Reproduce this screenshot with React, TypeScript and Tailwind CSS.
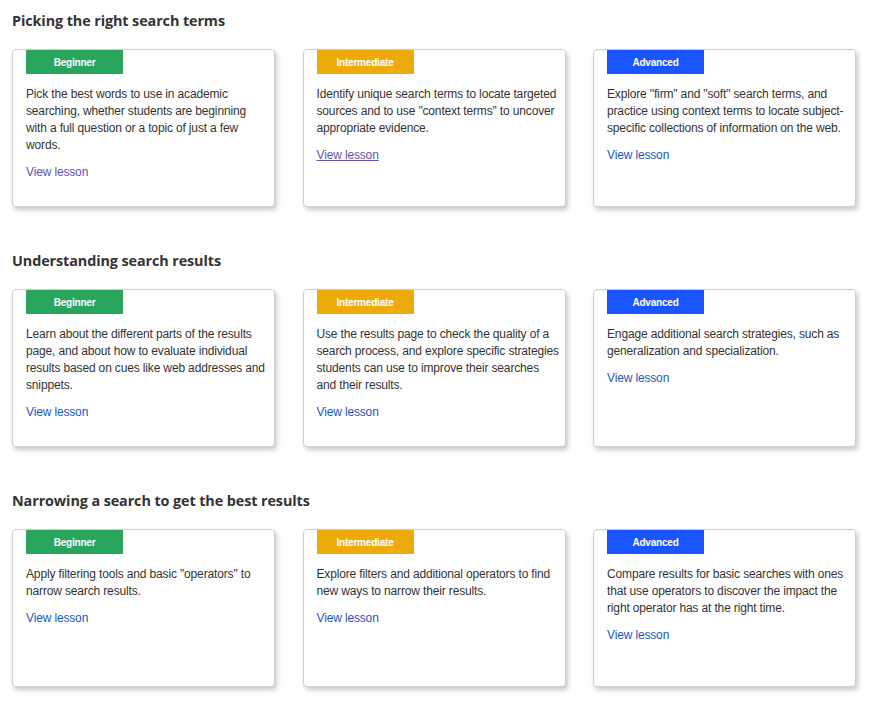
const sections = [
  {
    title: 'Picking the right search terms',
    cards: [
      {
        text: 'Pick the best words to use in academic searching, whether students are beginning with a full question or a topic of just a few words.',
        link: 'visited',
        narrow: true,
      },
      {
        text: 'Identify unique search terms to locate targeted sources and to use "context terms" to uncover appropriate evidence.',
        link: 'hover',
      },
      {
        text: 'Explore "firm" and "soft" search terms, and practice using context terms to locate subject-specific collections of information on the web.',
        link: 'normal',
      },
    ],
  },
  {
    title: 'Understanding search results',
    cards: [
      {
        text: 'Learn about the different parts of the results page, and about how to evaluate individual results based on cues like web addresses and snippets.',
        link: 'normal',
      },
      {
        text: 'Use the results page to check the quality of a search process, and explore specific strategies students can use to improve their searches and their results.',
        link: 'normal',
      },
      {
        text: 'Engage additional search strategies, such as generalization and specialization.',
        link: 'normal',
      },
    ],
  },
  {
    title: 'Narrowing a search to get the best results',
    cards: [
      {
        text: 'Apply filtering tools and basic "operators" to narrow search results.',
        link: 'normal',
      },
      {
        text: 'Explore filters and additional operators to find new ways to narrow their results.',
        link: 'normal',
      },
      {
        text: 'Compare results for basic searches with ones that use operators to discover the impact the right operator has at the right time.',
        link: 'normal',
      },
    ],
  },
]

const levels = [
  { label: 'Beginner', className: 'bg-[#2aa55c]' },
  { label: 'Intermediate', className: 'bg-[#edaa08]' },
  { label: 'Advanced', className: 'bg-[#1b55ff]' },
]

const linkClass: Record<string, string> = {
  visited: 'text-[#6650b0]',
  hover: 'text-[#6650b0] underline',
  normal: 'text-[#1a57c0]',
}

type CardProps = {
  level: number
  text: string
  link: string
  narrow?: boolean
}

const LessonCard = (props: CardProps) => {
  const level = levels[props.level]
  return (
    <div className="h-[158px] rounded-[4px] border border-[#cfcfcf] bg-white pl-[13px] pr-[4px] shadow-[2px_3px_5px_rgba(0,0,0,0.22)]">
      <div
        className={`flex h-6 w-[97px] items-center justify-center text-[10px] font-bold tracking-[-0.2px] text-white ${level.className}`}
      >
        {level.label}
      </div>
      <p
        className={`mt-[12px] text-[12px] leading-[17px] tracking-[-0.15px] text-[#333] ${props.narrow ? 'max-w-[236px]' : ''}`}
      >
        {props.text}
      </p>
      <a
        href="#"
        className={`mt-[10px] block w-fit text-[12px] leading-[17px] tracking-[-0.15px] ${linkClass[props.link]}`}
      >
        View lesson
      </a>
    </div>
  )
}

export default function App() {
  return (
    <div className="min-h-screen bg-white px-3 pt-[11px] font-['Liberation_Sans',Arial,sans-serif]">
      <div className="flex flex-col gap-[44px]">
        {sections.map((section) => (
          <section key={section.title}>
            <h2 className="mb-[18px] h-5 font-['Open_Sans',sans-serif] text-[14.4px] font-bold leading-5 tracking-[-0.1px] text-[#333]">
              {section.title}
            </h2>
            <div className="grid grid-cols-[263px_263px_263px] gap-x-[27.5px]">
              {section.cards.map((card, i) => (
                <LessonCard key={i} level={i} text={card.text} link={card.link} narrow={card.narrow} />
              ))}
            </div>
          </section>
        ))}
      </div>
    </div>
  )
}
